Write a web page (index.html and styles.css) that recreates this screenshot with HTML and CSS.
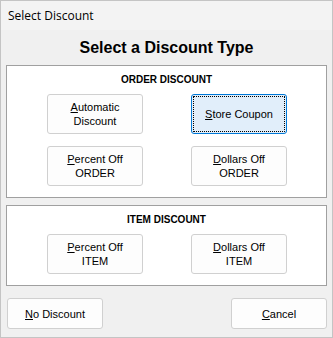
FILE: index.html
```html
<!DOCTYPE html>
<html lang="en">
<head>
    <meta charset="UTF-8">
    <title>Select Discount</title>
    <link rel="stylesheet" href="styles.css">
</head>
<body>
    <div class="window">
        <div class="titlebar">Select Discount</div>

        <div class="heading">Select a Discount Type</div>

        <div class="group">
            <div class="group-title">ORDER DISCOUNT</div>
            <div class="choices">
                <button class="btn"><u>A</u>utomatic<br>Discount</button>
                <button class="btn focused"><u>S</u>tore Coupon</button>
                <button class="btn"><u>P</u>ercent Off<br>ORDER</button>
                <button class="btn"><u>D</u>ollars Off<br>ORDER</button>
            </div>
        </div>

        <div class="group group-item">
            <div class="group-title">ITEM DISCOUNT</div>
            <div class="choices">
                <button class="btn"><u>P</u>ercent Off<br>ITEM</button>
                <button class="btn"><u>D</u>ollars Off<br>ITEM</button>
            </div>
        </div>

        <div class="footer">
            <button class="btn btn-small"><u>N</u>o Discount</button>
            <button class="btn btn-small"><u>C</u>ancel</button>
        </div>
    </div>
</body>
</html>
```

FILE: styles.css
```css
html, body {
    margin: 0;
    padding: 0;
    background-color: #f0f0f0;
}
.window {
    width: 333px;
    height: 338px;
    box-sizing: border-box;
    border: 1px solid #c4c4c4;
    background-color: #f0f0f0;
    display: flex;
    flex-direction: column;
    font-family: "Liberation Sans", Arial, sans-serif;
    color: #000;
}
.titlebar {
    height: 29px;
    line-height: 29px;
    padding-left: 7px;
    background-color: #f3f3f3;
    font-family: "Open Sans", "Noto Sans", sans-serif;
    font-size: 12px;
}
.heading {
    height: 35px;
    display: flex;
    align-items: center;
    justify-content: center;
    font-size: 16px;
    font-weight: bold;
}
.group {
    margin: 0 5px;
    border: 1px solid #a0a0a0;
    background-color: #fff;
    padding: 6px 0 11px;
}
.group-item {
    margin-top: 7px;
}
.group-title {
    height: 16px;
    line-height: 16px;
    text-align: center;
    font-size: 10px;
    font-weight: bold;
    margin-bottom: 6px;
}
.choices {
    display: grid;
    grid-template-columns: 96px 96px;
    column-gap: 48px;
    row-gap: 12px;
    justify-content: center;
    padding-left: 1px;
}
.btn {
    height: 40px;
    padding: 0;
    border: 1px solid #d0d0d0;
    border-radius: 3px;
    background-color: #fdfdfd;
    font-family: "Liberation Sans", Arial, sans-serif;
    font-size: 11px;
    line-height: 14px;
    color: #000;
    text-align: center;
}
.focused {
    background-color: #e1eefa;
    border-color: #0078d7;
    outline: 1px dotted #000;
    outline-offset: -3px;
}
.footer {
    display: flex;
    justify-content: space-between;
    padding: 12px 5px 0 6px;
}
.btn-small {
    width: 96px;
    height: 31px;
}
```
